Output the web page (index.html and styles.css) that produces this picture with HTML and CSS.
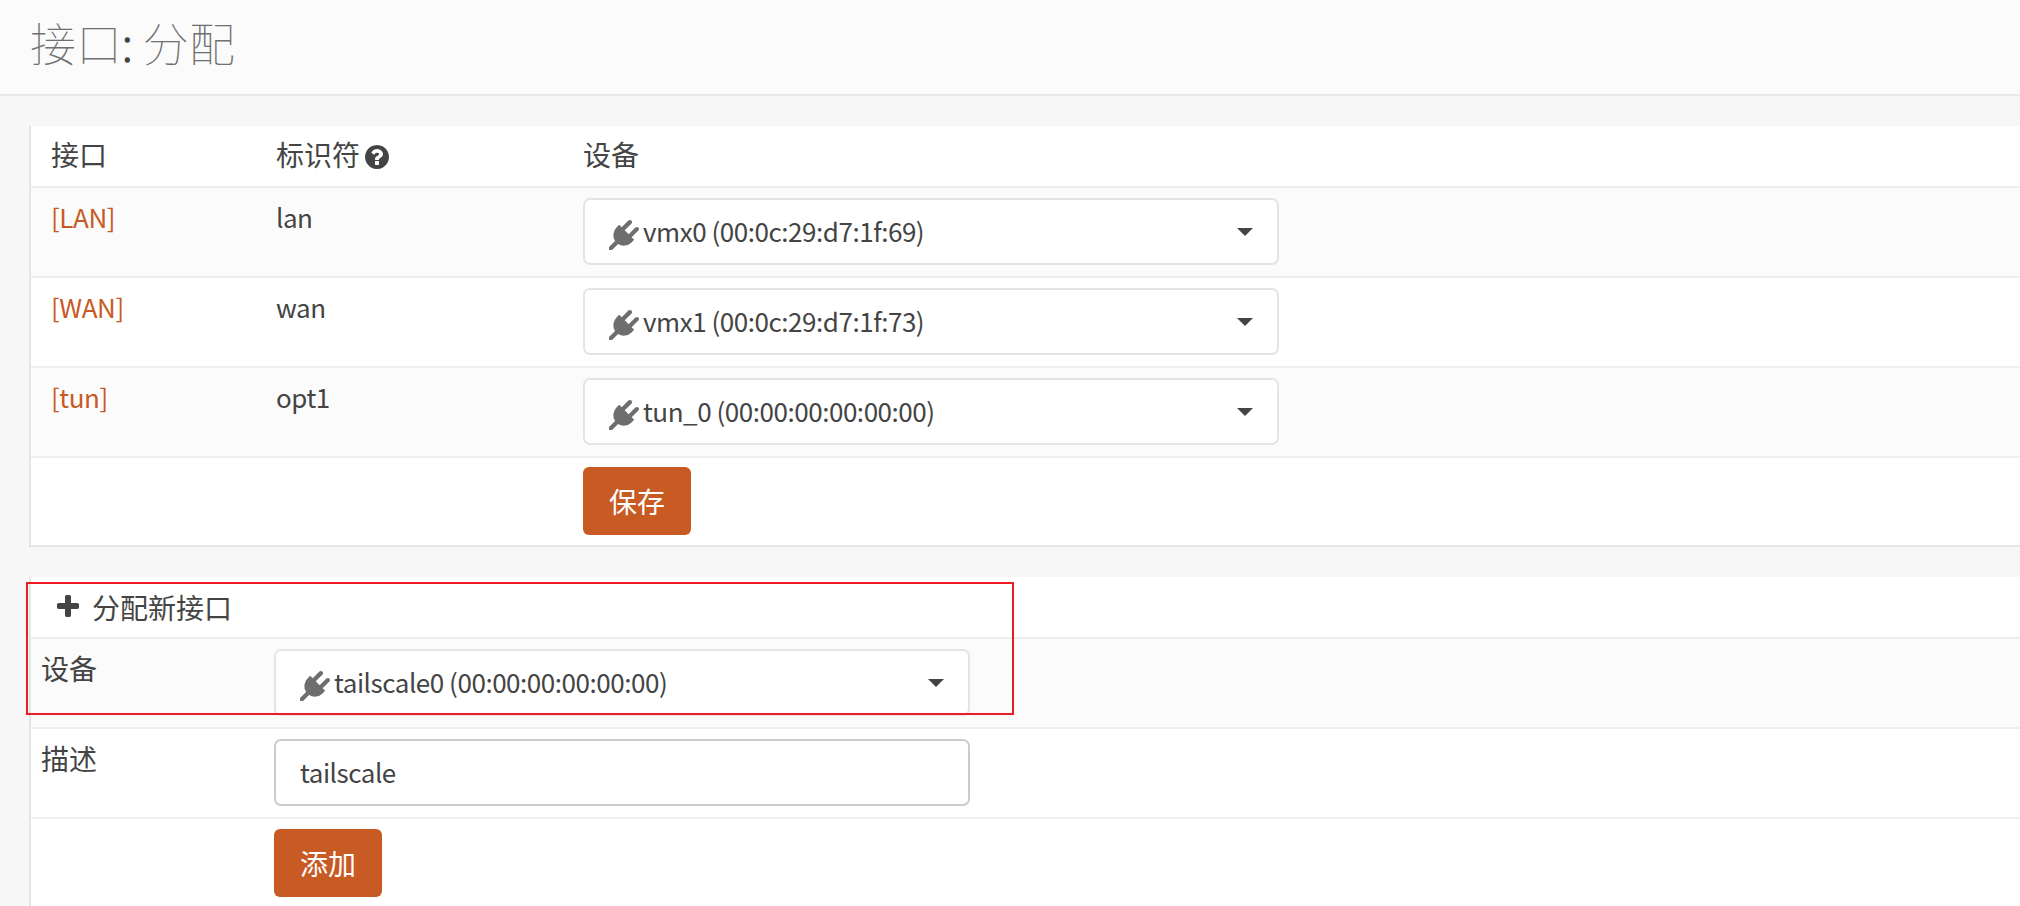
FILE: index.html
```html
<!DOCTYPE html>
<html lang="zh-CN">
<head>
<meta charset="utf-8">
<title>接口: 分配</title>
<link rel="stylesheet" href="styles.css">
</head>
<body>
<svg class="sprite" aria-hidden="true">
  <symbol id="i-plug" viewBox="0 0 1792 1792"><path d="M1755 453q37 38 37 90.5t-37 90.5l-401 400 150 150-160 160q-163 163-389.5 186.5t-411.5-100.5l-362 362h-181v-181l362-362q-124-185-100.5-411.5t186.5-389.5l160-160 150 150 400-401q38-37 91-37t90 37 37 90.5-37 90.5l-400 401 234 234 401-400q38-37 91-37t90 37z"/></symbol>
  <symbol id="i-help" viewBox="0 0 1792 1792"><path d="M1024 1376v-192q0-14-9-23t-23-9h-192q-14 0-23 9t-9 23v192q0 14 9 23t23 9h192q14 0 23-9t9-23zm256-672q0-88-55.5-163t-138.5-116-170-41q-243 0-371 213-15 24 8 42l132 100q7 6 19 6 16 0 25-12 53-68 86-92 34-24 86-24 48 0 85.5 26t37.5 59q0 38-20 61t-68 45q-63 28-115.5 86.5t-52.5 125.5v36q0 14 9 23t23 9h192q14 0 23-9t9-23q0-19 21.5-49.5t54.5-49.5q32-18 49-28.5t46-35 44.5-48 28-60.5 12.5-81zm384 192q0 209-103 385.5t-279.5 279.5-385.5 103-385.5-103-279.5-279.5-103-385.5 103-385.5 279.5-279.5 385.5-103 385.5 103 279.5 279.5 103 385.5z"/></symbol>
  <symbol id="i-plus" viewBox="0 0 1792 1792"><path d="M1600 736v192q0 40-28 68t-68 28h-416v416q0 40-28 68t-68 28h-192q-40 0-68-28t-28-68v-416h-416q-40 0-68-28t-28-68v-192q0-40 28-68t68-28h416v-416q0-40 28-68t68-28h192q40 0 68 28t28 68v416h416q40 0 68 28t28 68z"/></symbol>
</svg>

<header class="page-head"><h1>接口<span class="colon">:</span> 分配</h1></header>

<main class="content">
  <section class="panel assign">
    <div class="row head">
      <div class="cell zh">接口</div>
      <div class="cell zh">标识符 <svg class="help"><use href="#i-help"/></svg></div>
      <div class="cell zh">设备</div>
    </div>
    <div class="row tint">
      <div class="cell"><a class="link">[LAN]</a></div>
      <div class="cell">lan</div>
      <div class="cell ctl"><button class="select"><svg class="plug"><use href="#i-plug"/></svg><span class="val">vmx0 (00:0c:29:d7:1f:69)</span><span class="caret"></span></button></div>
    </div>
    <div class="row">
      <div class="cell"><a class="link">[WAN]</a></div>
      <div class="cell">wan</div>
      <div class="cell ctl"><button class="select"><svg class="plug"><use href="#i-plug"/></svg><span class="val">vmx1 (00:0c:29:d7:1f:73)</span><span class="caret"></span></button></div>
    </div>
    <div class="row tint">
      <div class="cell"><a class="link">[tun]</a></div>
      <div class="cell">opt1</div>
      <div class="cell ctl"><button class="select"><svg class="plug"><use href="#i-plug"/></svg><span class="val">tun_0 (00:00:00:00:00:00)</span><span class="caret"></span></button></div>
    </div>
    <div class="row last">
      <div class="cell"></div>
      <div class="cell"></div>
      <div class="cell ctl"><button class="btn zh">保存</button></div>
    </div>
  </section>

  <section class="panel add">
    <div class="row head">
      <div class="title zh"><svg class="plus"><use href="#i-plus"/></svg>分配新接口</div>
    </div>
    <div class="row tint">
      <div class="cell zh">设备</div>
      <div class="cell ctl"><button class="select"><svg class="plug"><use href="#i-plug"/></svg><span class="val">tailscale0 (00:00:00:00:00:00)</span><span class="caret"></span></button></div>
    </div>
    <div class="row">
      <div class="cell zh">描述</div>
      <div class="cell ctl"><input class="input" type="text" value="tailscale"></div>
    </div>
    <div class="row last">
      <div class="cell"></div>
      <div class="cell ctl"><button class="btn zh">添加</button></div>
    </div>
    <div class="mark"></div>
  </section>
</main>
</body>
</html>
```

FILE: styles.css
```css
* { box-sizing: border-box; }
html, body { margin: 0; height: 906px; overflow: hidden; }
body {
  background: #f7f7f7;
  color: #444;
  font-family: "Noto Sans CJK SC", "Noto Sans", sans-serif;
  font-size: 26px;
  letter-spacing: -0.46px;
  line-height: 38px;
}
.sprite { display: none; }

.zh { font-size: 28px; letter-spacing: 0; }

.page-head {
  height: 96px;
  background: #fbfbfb;
  border-bottom: 2px solid #e8e8e8;
  padding: 0 30px;
}
.page-head h1 {
  margin: 0;
  font-family: "Noto Sans CJK SC Thin", "Noto Sans CJK SC Light", "Noto Sans CJK SC DemiLight", "Noto Sans CJK SC", sans-serif;
  font-size: 46px;
  font-weight: 300;
  letter-spacing: 0;
  line-height: 82px;
  color: #707070;
}
.colon {
  color: #444;
  font-weight: 700;
}

.content { padding: 30px 0 0 29px; }

.panel {
  position: relative;
  background: #fff;
  border-left: 2px solid #e5e5e5;
}
.assign { border-bottom: 2px solid #e5e5e5; margin-bottom: 30px; }

.row {
  display: grid;
  height: 90px;
  border-bottom: 2px solid #eee;
}
.assign .row { grid-template-columns: 225px 307px 1fr; padding-left: 20px; }
.add .row { grid-template-columns: 233px 1fr; padding-left: 10px; }
.row.tint { background: #fbfbfb; }
.row.head { height: 62px; }
.row.last { height: 87px; border-bottom: 0; }
.add .row.last { height: 89px; }

.cell { padding-top: 10px; }
.head .cell { padding-top: 9px; }
.cell.ctl { padding-top: 10px; }
.assign .last .cell.ctl { padding-top: 9px; }

.link { color: #c85a24; }

.help { width: 28px; height: 28px; fill: #444; vertical-align: -5px; margin-left: -3px; }

.title { padding: 0 0 0 13px; display: flex; align-items: center; height: 60px; }
.plus { width: 28px; height: 28px; fill: #444; margin-right: 10px; flex: none; }

.select {
  display: flex;
  align-items: center;
  width: 696px;
  height: 67px;
  padding: 0 25px 0 24px;
  background: #fff;
  border: 2px solid #e4e4e4;
  border-radius: 7px;
  color: #444;
  font: inherit;
  letter-spacing: inherit;
  text-align: left;
}
.plug { width: 30px; height: 30px; fill: #6e6e6e; margin-right: 4px; margin-top: 6px; flex: none; }
.val { flex: 1; padding-bottom: 2px; }
.caret {
  width: 0;
  height: 0;
  border-top: 8px solid #444;
  border-left: 8.5px solid transparent;
  border-right: 8.5px solid transparent;
  margin-right: -1px;
}

.input {
  display: block;
  width: 696px;
  height: 67px;
  padding: 0 24px 2px;
  background: #fff;
  border: 2px solid #ccc;
  border-radius: 7px;
  color: #444;
  font: inherit;
  letter-spacing: inherit;
  outline: none;
}

.btn {
  display: block;
  width: 108px;
  height: 68px;
  padding: 0;
  background: #c85a24;
  border: 0;
  border-radius: 6px;
  color: #fff;
  font-family: inherit;
  font-size: 28px;
}

.mark {
  position: absolute;
  left: -5px;
  top: 5px;
  width: 988px;
  height: 133px;
  border: 2px solid #ed1c24;
  pointer-events: none;
}
```
